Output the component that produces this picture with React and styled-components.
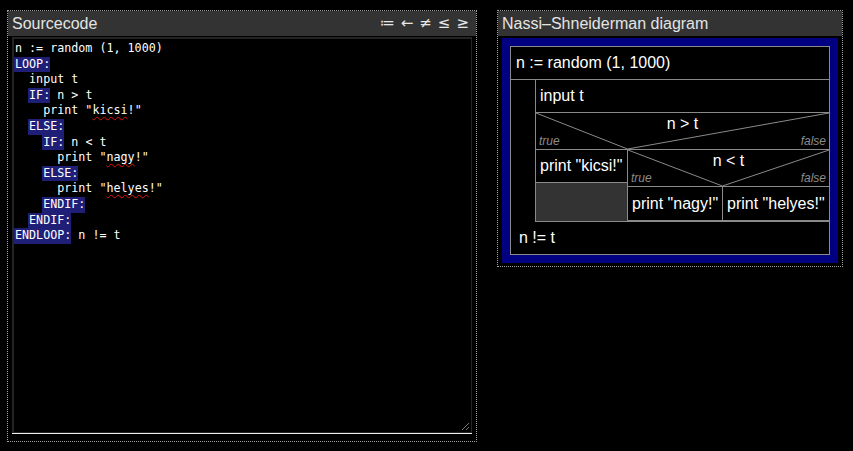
import React from 'react';
import styled, { createGlobalStyle } from 'styled-components';

const Global = createGlobalStyle`
  html, body { margin: 0; background: #000; }
  body { font-family: "Liberation Sans", Arial, sans-serif; }
`

const Page = styled.div`
  display: flex;
  align-items: flex-start;
  gap: 20px;
  padding: 10px 0 0 7px;
`

const Panel = styled.div`
  width: ${p => p.$w}px;
  box-sizing: border-box;
  border: 1px dotted #a0a0a0;
  display: flex;
  flex-direction: column;
`

const Header = styled.div`
  height: 25px;
  line-height: 25px;
  background: #333;
  color: #e4e4e4;
  font-size: 16px;
  padding: 0 7px 0 4px;
  display: flex;
  justify-content: space-between;
  white-space: nowrap;
`

const Symbols = styled.div`
  display: flex;
  gap: 6px;
  font-family: "DejaVu Sans", sans-serif;
  font-size: 15px;
  color: #e8e8e8;
`

const Editor = styled.div`
  position: relative;
  height: 391px;
  margin: 1px 4px 8px;
  border: 1px solid #242424;
  border-top-width: 2px;
  border-left-width: 2px;
  box-shadow: 0 1px 0 #eee;
  background: #000;
  color: #fff;
  font-family: "DejaVu Sans Mono", monospace;
  font-size: 11.7px;
  line-height: 15.6px;
  padding: 2px 1px 0;
  white-space: pre;
`

const Kw = styled.span`
  display: inline-block;
  background: #1f1f78;
  padding-left: 1px;
  margin-left: -1px;
`

const Typo = styled.span`
  text-decoration: underline wavy #e01010;
  text-decoration-skip-ink: none;
  text-underline-offset: 2px;
  text-decoration-thickness: 1px;
`

const Grip = styled.svg`
  position: absolute;
  right: 1px;
  bottom: 1px;
`

const Frame = styled.div`
  margin: 2px 4px 3px;
  background: #000080;
  padding: 8px;
`

const Nsd = styled.div`
  border: 1px solid #8a8a8a;
  background: #000;
  color: #fff;
  font-size: 16px;
`

const Stmt = styled.div`
  height: ${p => p.$h || 32}px;
  line-height: ${p => p.$h || 32}px;
  padding-left: ${p => p.$pad ?? 4}px;
  white-space: nowrap;
  border-bottom: ${p => p.$bottom ? '1px solid #8a8a8a' : 'none'};
  border-right: ${p => p.$right ? '1px solid #8a8a8a' : 'none'};
`

const Loop = styled.div`
  display: grid;
  grid-template-columns: 24px 1fr;
`

const LoopBody = styled.div`
  border-left: 1px solid #8a8a8a;
  border-bottom: 1px solid #8a8a8a;
`

const IfHead = styled.div`
  position: relative;
  height: 36px;
  line-height: 22px;
  text-align: center;
  border-bottom: 1px solid #8a8a8a;
`

const Diag = styled.svg`
  position: absolute;
  inset: 0;
  width: 100%;
  height: 100%;
  overflow: visible;
`

const Label = styled.span`
  position: absolute;
  bottom: 1px;
  ${p => p.$side}: 3px;
  font-size: 12px;
  line-height: 14px;
  font-style: italic;
  color: #8c8c8c;
`

const Branches = styled.div`
  display: grid;
  grid-template-columns: ${p => p.$left}px 1fr;
  border-bottom: ${p => p.$bottom ? '1px solid #8a8a8a' : 'none'};
`

const Branch = styled.div`
  display: flex;
  flex-direction: column;
  border-right: ${p => p.$right ? '1px solid #8a8a8a' : 'none'};
`

const Empty = styled.div`
  flex: 1;
  background: #333;
`

const Cond = ({ text, split }) => (
  <IfHead>
    <Diag>
      <line x1="0" y1="0" x2={split} y2="100%" stroke="#8a8a8a" strokeWidth="1" />
      <line x1="100%" y1="0" x2={split} y2="100%" stroke="#8a8a8a" strokeWidth="1" />
    </Diag>
    {text}
    <Label $side="left">true</Label>
    <Label $side="right">false</Label>
  </IfHead>
)

const App = () => {
  return (
    <>
      <Global />
      <Page>
        <Panel $w={470}>
          <Header>
            <span>Sourcecode</span>
            <Symbols>
              <span>≔</span><span>←</span><span>≠</span><span>≤</span><span>≥</span>
            </Symbols>
          </Header>
          <Editor>
{`n := random (1, 1000)
`}<Kw>LOOP:</Kw>{`
  input t
  `}<Kw>IF:</Kw>{` n > t
    print "`}<Typo>kicsi</Typo>{`!"
  `}<Kw>ELSE:</Kw>{`
    `}<Kw>IF:</Kw>{` n < t
      print "`}<Typo>nagy</Typo>{`!"
    `}<Kw>ELSE:</Kw>{`
      print "`}<Typo>helyes</Typo>{`!"
    `}<Kw>ENDIF:</Kw>{`
  `}<Kw>ENDIF:</Kw>{`
`}<Kw>ENDLOOP:</Kw>{` n != t`}
            <Grip width="10" height="10" viewBox="0 0 10 10">
              <line x1="9" y1="2" x2="2" y2="9" stroke="#777" />
              <line x1="9" y1="6" x2="6" y2="9" stroke="#777" />
            </Grip>
          </Editor>
        </Panel>

        <Panel $w={346}>
          <Header>
            <span>Nassi–Shneiderman diagram</span>
          </Header>
          <Frame>
            <Nsd>
              <Stmt $pad={5} $bottom>n := random (1, 1000)</Stmt>
              <Loop>
                <div />
                <LoopBody>
                  <Stmt $bottom>input t</Stmt>
                  <Cond text="n > t" split={91.5} />
                  <Branches $left={92}>
                    <Branch $right>
                      <Stmt $bottom>print "kicsi!"</Stmt>
                      <Empty />
                    </Branch>
                    <Branch>
                      <Cond text="n < t" split={94.5} />
                      <Branches $left={95} $bottom>
                        <Stmt $h={33} $right>print "nagy!"</Stmt>
                        <Stmt $h={33}>print "helyes!"</Stmt>
                      </Branches>
                    </Branch>
                  </Branches>
                </LoopBody>
              </Loop>
              <Stmt $pad={8}>n != t</Stmt>
            </Nsd>
          </Frame>
        </Panel>
      </Page>
    </>
  )
}

export default App;
